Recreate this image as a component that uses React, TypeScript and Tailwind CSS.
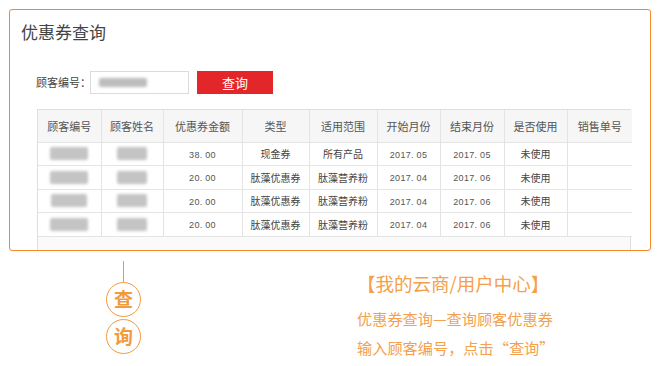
import React from 'react';

const cjk = { fontFamily: '"Noto Sans CJK SC", "Noto Sans", sans-serif' };

const cols = [63, 62, 79, 67, 68, 63, 64, 63, 65];
const heads = ['顾客编号', '顾客姓名', '优惠券金额', '类型', '适用范围', '开始月份', '结束月份', '是否使用', '销售单号'];

const rows = [
  { amount: '38.00', type: '现金券', scope: '所有产品', start: '2017.05', end: '2017.05', used: '未使用', w1: 38, w2: 30 },
  { amount: '20.00', type: '肽藻优惠券', scope: '肽藻营养粉', start: '2017.04', end: '2017.06', used: '未使用', w1: 38, w2: 30 },
  { amount: '20.00', type: '肽藻优惠券', scope: '肽藻营养粉', start: '2017.04', end: '2017.06', used: '未使用', w1: 36, w2: 30 },
  { amount: '20.00', type: '肽藻优惠券', scope: '肽藻营养粉', start: '2017.04', end: '2017.06', used: '未使用', w1: 38, w2: 30 },
];

const Blob = ({ w }: { w: number }) => (
  <div className="mx-auto h-[13px] rounded-[2px] bg-[#c4c4c4] blur-[1.5px]" style={{ width: w }} />
);

const Num = ({ v }: { v: string }) => (
  <span className="text-[9px] tracking-[0.3px] text-[#555]" style={{ fontFamily: '"Liberation Sans", sans-serif' }}>
    {v.replace('.', '. ')}
  </span>
);

const CouponQuery = () => {
  return (
    <div className="ml-[9px] mt-[9px] h-[242px] w-[642px] overflow-hidden rounded-[3px] border border-[#f5862a] bg-white">
      {/* Title */}
      <div className="pl-[11px] pt-[11px] text-[17px] leading-[22px] text-[#444]">优惠券查询</div>

      {/* Search row */}
      <div className="mt-[28px] flex h-[23px] items-center pl-[26px]">
        <span className="w-[54px] whitespace-nowrap text-[11px] text-[#444]">顾客编号：</span>
        <div className="flex h-[23px] w-[99px] items-center border border-[#dcdcdc] pl-[8px]">
          <div className="h-[9px] w-[48px] rounded-[2px] bg-[#bdbdbd] blur-[1.5px]" />
        </div>
        <button className="ml-[8px] h-[23px] w-[76px] bg-[#e3262a] text-[13px] leading-none text-white">查询</button>
      </div>

      {/* Table */}
      <div className="ml-[27px] mt-[15px] h-[200px] w-[594px] border border-[#dedede] bg-[#fafafa]">
        <table className="w-full table-fixed border-collapse bg-white">
          <colgroup>
            {cols.map((w, i) => (
              <col key={i} style={{ width: w }} />
            ))}
          </colgroup>
          <thead>
            <tr className="h-[32px] bg-[#f6f6f6]">
              {heads.map((h) => (
                <th key={h} className="border-b border-r border-[#e4e4e4] text-[11px] font-normal text-[#555] last:border-r-0">
                  {h}
                </th>
              ))}
            </tr>
          </thead>
          <tbody>
            {rows.map((r, i) => (
              <tr key={i} className="h-[23.5px] text-center text-[10px] text-[#444]">
                <td className="border-b border-r border-[#e4e4e4]"><Blob w={r.w1} /></td>
                <td className="border-b border-r border-[#e4e4e4]"><Blob w={r.w2} /></td>
                <td className="border-b border-r border-[#e4e4e4]"><Num v={r.amount} /></td>
                <td className="border-b border-r border-[#e4e4e4]">{r.type}</td>
                <td className="border-b border-r border-[#e4e4e4]">{r.scope}</td>
                <td className="border-b border-r border-[#e4e4e4]"><Num v={r.start} /></td>
                <td className="border-b border-r border-[#e4e4e4]"><Num v={r.end} /></td>
                <td className="border-b border-r border-[#e4e4e4]">{r.used}</td>
                <td className="border-b border-[#e4e4e4]"></td>
              </tr>
            ))}
          </tbody>
        </table>
      </div>
    </div>
  );
};

const App = () => {
  return (
    <div className="h-[366px] w-[658px] overflow-hidden bg-white" style={cjk}>
      <CouponQuery />

      {/* Caption */}
      <div className="flex">
        <div className="ml-[106px] flex w-[35px] flex-col items-center pt-[10px]">
          <div className="h-[21px] w-px bg-[#f39a3e]" />
          <div className="flex h-[35px] w-[35px] items-center justify-center rounded-full border border-[#f39a3e] text-[19px] font-bold text-[#f39a3e]">
            查
          </div>
          <div className="mt-[2px] flex h-[35px] w-[35px] items-center justify-center rounded-full border border-[#f39a3e] text-[19px] font-bold text-[#f39a3e]">
            询
          </div>
        </div>
        <div className="ml-[216px] pt-[20px] text-[#f4a04d]">
          <div className="text-[18.5px] leading-[24px] text-[#f5a04a]">【我的云商/用户中心】</div>
          <div className="mt-[13px] text-[15.2px] leading-[20px]">优惠券查询—查询顾客优惠券</div>
          <div className="mt-[9px] text-[15.2px] leading-[20px]">输入顾客编号，点击“查询”</div>
        </div>
      </div>
    </div>
  );
};

export default App;
